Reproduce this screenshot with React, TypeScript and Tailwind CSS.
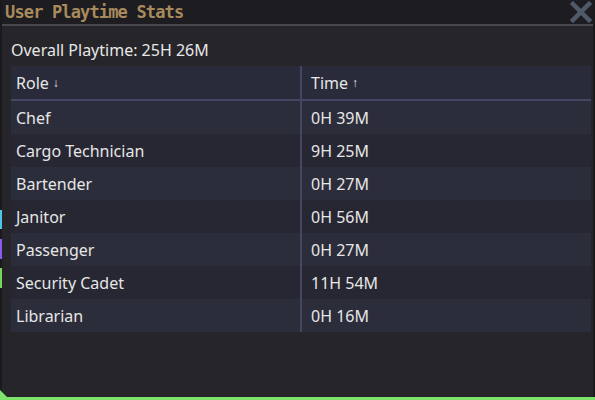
const ROWS: [string, string][] = [
  ["Chef", "0H 39M"],
  ["Cargo Technician", "9H 25M"],
  ["Bartender", "0H 27M"],
  ["Janitor", "0H 56M"],
  ["Passenger", "0H 27M"],
  ["Security Cadet", "11H 54M"],
  ["Librarian", "0H 16M"],
];

export default function App() {
  return (
    <div className="relative w-[595px] h-[400px] overflow-hidden bg-[#1a1a1d] font-['Noto_Sans',sans-serif]">
      {/* bits of the game UI peeking out behind the window */}
      <div className="absolute left-0 top-[210px] w-[2px] h-[19px] bg-[#4fc6e8]" />
      <div className="absolute left-0 top-[239px] w-[2px] h-[20px] bg-[#8a5cf0]" />
      <div className="absolute left-0 top-[268px] w-[2px] h-[20px] bg-[#7bd45a]" />

      <div className="relative ml-[2px] w-[591px] h-[397px] flex flex-col bg-[#25252a]">
        <div className="h-[24px] shrink-0 flex items-center justify-between bg-[#1c1c21] pl-[3px] pr-[1px]">
          <span className="font-['DejaVu_Sans_Mono',monospace] font-bold text-[17px] leading-none tracking-[-0.85px] text-[#a88a5c]">
            User Playtime Stats
          </span>
          <svg width="22" height="22" viewBox="0 0 22 22">
            <path d="M3 3L19 19M19 3L3 19" stroke="#4e5a6a" strokeWidth="4.5" strokeLinecap="square" />
          </svg>
        </div>
        <div className="h-[2px] shrink-0 bg-[#47474d]" />

        <div className="flex flex-col pl-[9px] pt-[13px]">
          <div className="text-[16px] leading-[22px] text-[#e8e8e8]">Overall Playtime: 25H 26M</div>

          <div className="mt-[5px] w-[580px] flex flex-col text-[16px] text-[#e6e6e6]">
            <div className="flex h-[35px] bg-[#292b3a] border-b-2 border-[#434763]">
              <div className="w-[291px] flex items-center pl-[5px] border-r-2 border-[#434763]">
                Role <span className="ml-[4px] text-[12px] font-bold">↓</span>
              </div>
              <div className="flex-1 flex items-center pl-[9px]">
                Time <span className="ml-[4px] text-[12px] font-bold">↑</span>
              </div>
            </div>
            {ROWS.map(([role, time], i) => (
              <div key={role} className={`flex h-[33px] ${i % 2 === 0 ? "bg-[#2c2d3a]" : "bg-[#262733]"}`}>
                <div className="w-[291px] flex items-center pl-[5px] border-r-2 border-[#434763]">{role}</div>
                <div className="flex-1 flex items-center pl-[9px]">{time}</div>
              </div>
            ))}
          </div>
        </div>
      </div>

      <div className="absolute left-0 bottom-0 w-full h-[3px] bg-[#7ee36b]" />
      <svg className="absolute left-0 bottom-0" width="12" height="14" viewBox="0 0 12 14">
        <path d="M0 4L10 14H0Z" fill="#7ee36b" />
      </svg>
    </div>
  );
}
